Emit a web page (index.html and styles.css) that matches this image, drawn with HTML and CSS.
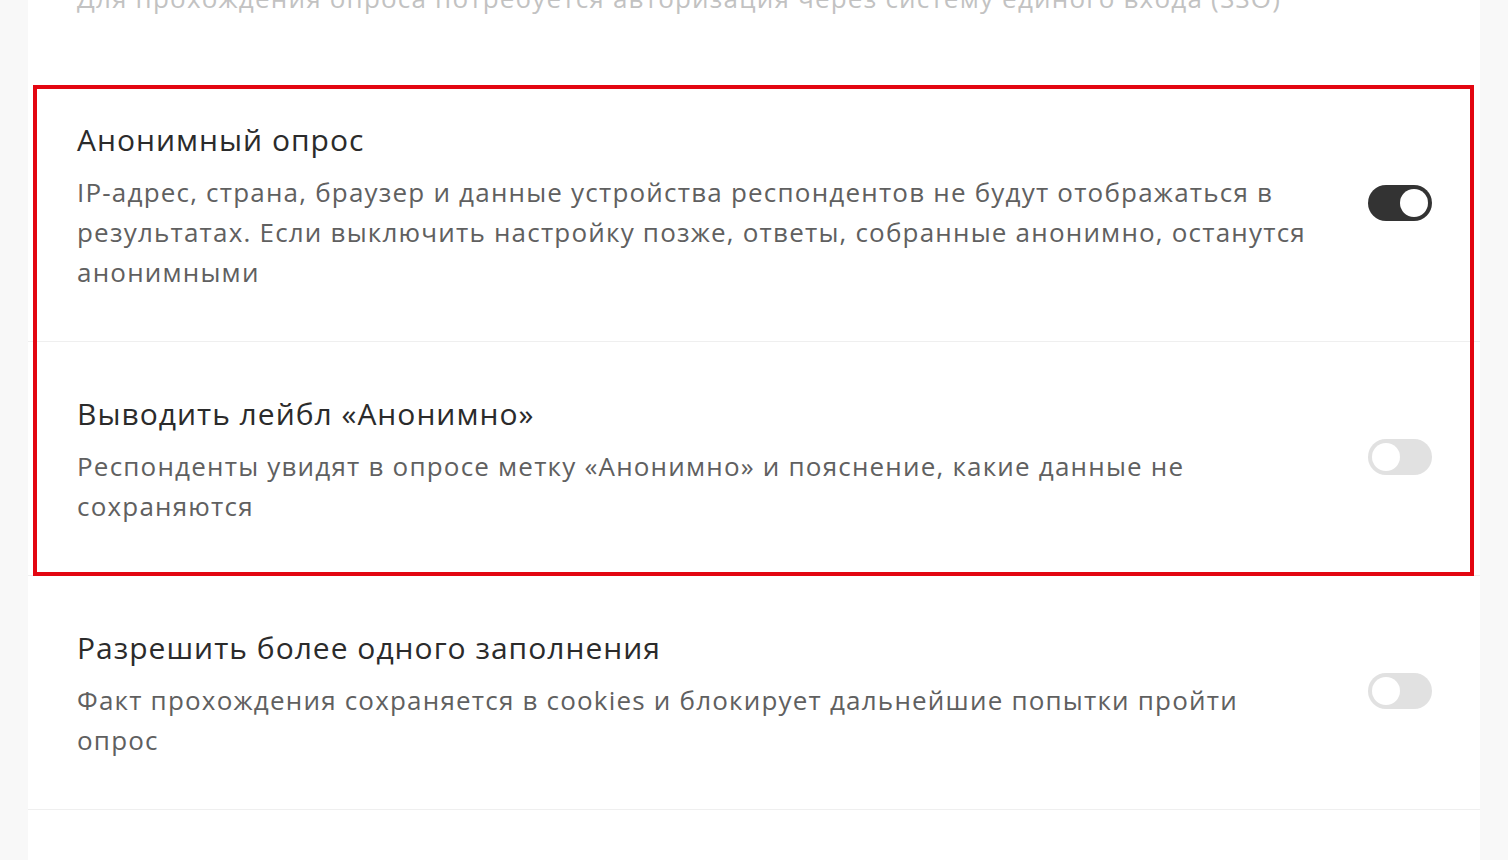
FILE: index.html
```html
<!DOCTYPE html>
<html lang="ru">

<head>
    <meta charset="utf-8">
    <meta name="viewport" content="width=device-width, initial-scale=1.0">
    <title>Настройки опроса</title>
    <link rel="stylesheet" href="styles.css">
</head>

<body>

    <div class="card">

        <!-- предыдущая настройка, недоступна -->
        <div class="setting setting--muted">
            <p class="setting__desc">Для прохождения опроса потребуется авторизация через систему единого входа (SSO)</p>
        </div>

        <div class="group group--marked">
            <div class="setting">
                <div class="setting__text">
                    <h3 class="setting__title">Анонимный опрос</h3>
                    <p class="setting__desc">IP-адрес, страна, браузер и данные устройства респондентов не будут отображаться в результатах. Если выключить настройку позже, ответы, собранные анонимно, останутся анонимными</p>
                </div>
                <label class="switch switch--on"><span class="switch__knob"></span></label>
            </div>

            <div class="setting">
                <div class="setting__text">
                    <h3 class="setting__title">Выводить лейбл «Анонимно»</h3>
                    <p class="setting__desc">Респонденты увидят в опросе метку «Анонимно» и пояснение, какие данные не сохраняются</p>
                </div>
                <label class="switch"><span class="switch__knob"></span></label>
            </div>
        </div>

        <div class="setting">
            <div class="setting__text">
                <h3 class="setting__title">Разрешить более одного заполнения</h3>
                <p class="setting__desc">Факт прохождения сохраняется в cookies и блокирует дальнейшие попытки пройти опрос</p>
            </div>
            <label class="switch"><span class="switch__knob"></span></label>
        </div>

        <div class="setting setting--empty"></div>

    </div>

</body>

</html>
```

FILE: styles.css
```css
body {
    margin: 0;
    background-color: #f8f8f8;
    font-family: "Open Sans", "Noto Sans", sans-serif;
    overflow: hidden;
}

.card {
    margin: -74px 28px 0;
    background-color: #fff;
}

.setting {
    display: flex;
    align-items: center;
    padding: 52px 48px 49px 49px;
    border-bottom: 1px solid #efefef;
}

.setting__text {
    flex: 1;
    min-width: 0;
}

.setting__title {
    margin: 0 0 12px;
    font-size: 30px;
    line-height: 40px;
    font-weight: 400;
    letter-spacing: 1px;
    color: #2b2b2b;
}

.setting__desc {
    margin: 0;
    font-size: 26px;
    line-height: 40px;
    letter-spacing: 1.2px;
    color: #606060;
}

.setting--muted {
    border-bottom: none;
    padding-bottom: 50px;
}

.setting--muted .setting__desc {
    color: #c2c2c2;
}

.setting--empty {
    height: 100px;
    border-bottom: none;
}

/* красная рамка вокруг блока анонимности */
.group--marked {
    position: relative;
}

.group--marked::after {
    content: "";
    position: absolute;
    top: 17px;
    left: 5px;
    right: 6px;
    bottom: 0;
    border: 4px solid #e30611;
    pointer-events: none;
}

.switch {
    flex: none;
    position: relative;
    width: 64px;
    height: 36px;
    margin-left: 48px;
    margin-top: -6px;
    border-radius: 18px;
    background-color: #dcdcdc;
    opacity: .85;
}

.switch__knob {
    position: absolute;
    top: 4px;
    left: 4px;
    width: 28px;
    height: 28px;
    border-radius: 50%;
    background-color: #fff;
}

.switch--on {
    background-color: #333;
    opacity: 1;
}

.switch--on .switch__knob {
    left: 32px;
}
```
